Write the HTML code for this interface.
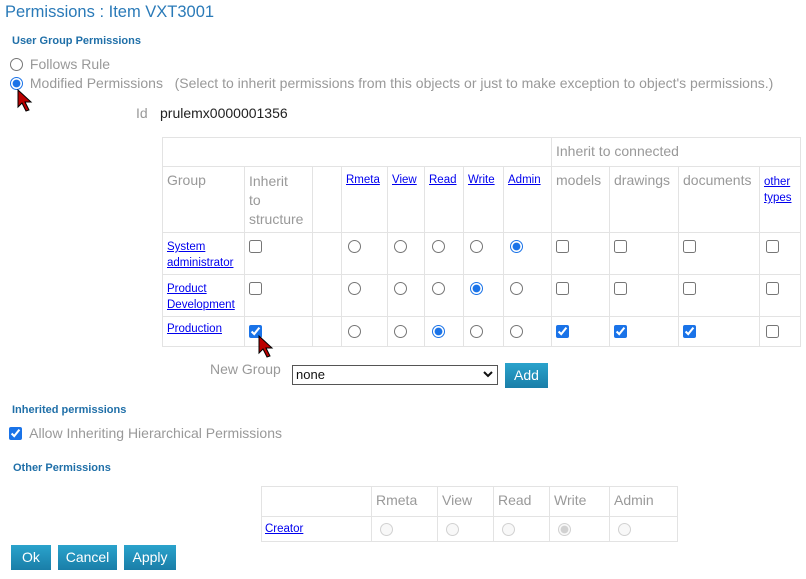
<!DOCTYPE html>
<html><head><meta charset="utf-8"><style>
*{box-sizing:border-box}
body{margin:0;width:806px;height:579px;background:#fff;font-family:"Segoe UI","Liberation Sans",sans-serif;font-size:14px;color:#999;position:relative;overflow:hidden}
.a{position:absolute;white-space:nowrap}
.h{color:#1f6fa8;font-weight:bold;font-size:11px}
a{color:#0000ee;text-decoration:underline}
table{border-collapse:collapse;table-layout:fixed;position:absolute}
td{border:1px solid #e3e3e3;padding:0 4px;vertical-align:top;color:#999;font-size:14px}
input{margin:0;accent-color:#1a73e8}
input[type=radio]{width:13px;height:13px}
input[type=checkbox]{width:13px;height:13px}
.sm{font-size:11.5px}
.btn{position:absolute;background:linear-gradient(#2aa3cc,#1a7ea8);color:#fff;font-size:14px;text-align:center;line-height:25px;height:25px}
</style></head><body>
<div class="a" style="left:5px;top:3px;font-size:16.5px;color:#2a7ab8">Permissions : Item VXT3001</div>
<div class="a h" style="left:12px;top:35px">User Group Permissions</div>
<div class="a" style="left:10px;top:56px"><input type="radio" style="vertical-align:-2px;margin-right:3px"> Follows Rule</div>
<div class="a" style="left:10px;top:75px"><input type="radio" checked style="vertical-align:-2px;margin-right:3px"> Modified Permissions &nbsp;&nbsp;(Select to inherit permissions from this objects or just to make exception to object's permissions.)</div>
<div class="a" style="left:136px;top:105px">Id</div>
<div class="a" style="left:160px;top:105px;color:#222">prulemx0000001356</div>

<table style="left:162px;top:137px;width:638px">
<colgroup><col style="width:82px"><col style="width:68px"><col style="width:29px"><col style="width:46px"><col style="width:37px"><col style="width:39px"><col style="width:40px"><col style="width:48px"><col style="width:58px"><col style="width:69px"><col style="width:81px"><col style="width:41px"></colgroup>
<tr style="height:29px"><td colspan="8"></td><td colspan="4" style="padding-top:5px">Inherit to connected</td></tr>
<tr style="height:66px"><td style="padding-top:5px">Group</td><td style="padding-top:5px;line-height:19px;white-space:normal">Inherit<br>to<br>structure</td><td></td>
<td class="sm" style="padding-top:7px"><a>Rmeta</a></td><td class="sm" style="padding-top:7px"><a>View</a></td><td class="sm" style="padding-top:7px"><a>Read</a></td><td class="sm" style="padding-top:7px"><a>Write</a></td><td class="sm" style="padding-top:7px"><a>Admin</a></td>
<td style="padding-top:5px">models</td><td style="padding-top:5px">drawings</td><td style="padding-top:5px">documents</td><td class="sm" style="padding-top:7px;line-height:16px"><a>other types</a></td></tr>
<tr style="height:42px"><td class="sm" style="padding-top:6px;line-height:16px"><a>System administrator</a></td><td style="padding-top:7px"><input type="checkbox"></td><td></td>
<td style="padding-top:7px;padding-left:6px"><input type="radio"></td><td style="padding-top:7px;padding-left:6px"><input type="radio"></td><td style="padding-top:7px;padding-left:7px"><input type="radio"></td><td style="padding-top:7px;padding-left:6px"><input type="radio"></td><td style="padding-top:7px;padding-left:6px"><input type="radio" checked></td>
<td style="padding-top:7px"><input type="checkbox"></td><td style="padding-top:7px"><input type="checkbox"></td><td style="padding-top:7px"><input type="checkbox"></td><td style="padding-top:7px;padding-left:6px"><input type="checkbox"></td></tr>
<tr style="height:42px"><td class="sm" style="padding-top:6px;line-height:16px"><a>Product Development</a></td><td style="padding-top:7px"><input type="checkbox"></td><td></td>
<td style="padding-top:7px;padding-left:6px"><input type="radio"></td><td style="padding-top:7px;padding-left:6px"><input type="radio"></td><td style="padding-top:7px;padding-left:7px"><input type="radio"></td><td style="padding-top:7px;padding-left:6px"><input type="radio" checked></td><td style="padding-top:7px;padding-left:6px"><input type="radio"></td>
<td style="padding-top:7px"><input type="checkbox"></td><td style="padding-top:7px"><input type="checkbox"></td><td style="padding-top:7px"><input type="checkbox"></td><td style="padding-top:7px;padding-left:6px"><input type="checkbox"></td></tr>
<tr style="height:30px"><td class="sm" style="padding-top:6px"><a>Production</a></td><td style="padding-top:8px"><input type="checkbox" checked></td><td></td>
<td style="padding-top:8px;padding-left:6px"><input type="radio"></td><td style="padding-top:8px;padding-left:6px"><input type="radio"></td><td style="padding-top:8px;padding-left:7px"><input type="radio" checked></td><td style="padding-top:8px;padding-left:6px"><input type="radio"></td><td style="padding-top:8px;padding-left:6px"><input type="radio"></td>
<td style="padding-top:8px"><input type="checkbox" checked></td><td style="padding-top:8px"><input type="checkbox" checked></td><td style="padding-top:8px"><input type="checkbox" checked></td><td style="padding-top:8px;padding-left:6px"><input type="checkbox"></td></tr>
</table>

<div class="a" style="left:210px;top:361px">New Group</div>
<div class="a" style="left:292px;top:365px;width:206px;height:20px;border:1px solid #555;color:#111;font-size:13px;padding:1px 3px">none</div>
<svg class="a" style="left:482px;top:370px" width="12" height="10"><path d="M2 2 L6 6 L10 2" stroke="#111" stroke-width="2" fill="none"/></svg>
<div class="btn" style="left:505px;top:363px;width:43px">Add</div>

<div class="a h" style="left:12px;top:404px">Inherited permissions</div>
<div class="a" style="left:9px;top:425px"><input type="checkbox" checked style="vertical-align:-2px;margin-right:4px"> Allow Inheriting Hierarchical Permissions</div>
<div class="a h" style="left:13px;top:462px">Other Permissions</div>

<table style="left:261px;top:486px;width:416px">
<colgroup><col style="width:110px"><col style="width:66px"><col style="width:56px"><col style="width:56px"><col style="width:60px"><col style="width:68px"></colgroup>
<tr style="height:30px"><td></td><td style="padding-top:5px">Rmeta</td><td style="padding-top:5px">View</td><td style="padding-top:5px">Read</td><td style="padding-top:5px">Write</td><td style="padding-top:5px">Admin</td></tr>
<tr style="height:25px"><td class="sm" style="padding:6px 3px"><a>Creator</a></td><td style="padding-top:6px;padding-left:8px"><input type="radio" disabled></td><td style="padding-top:6px;padding-left:8px"><input type="radio" disabled></td><td style="padding-top:6px;padding-left:8px"><input type="radio" disabled></td><td style="padding-top:6px;padding-left:8px"><input type="radio" disabled checked></td><td style="padding-top:6px;padding-left:8px"><input type="radio" disabled></td></tr>
</table>

<div class="btn" style="left:11px;top:545px;width:40px">Ok</div>
<div class="btn" style="left:58px;top:545px;width:59px">Cancel</div>
<div class="btn" style="left:124px;top:545px;width:52px">Apply</div>

<svg class="a" style="left:17px;top:89px" width="16" height="24"><path d="M1 1 L1 18 L5 14 L9 22 L12 21 L8 13 L14 13 Z" fill="#b00" stroke="#000" stroke-width="1"/></svg>
<svg class="a" style="left:258px;top:335px" width="16" height="24"><path d="M1 1 L1 18 L5 14 L9 22 L12 21 L8 13 L14 13 Z" fill="#b00" stroke="#000" stroke-width="1"/></svg>
</body></html>
